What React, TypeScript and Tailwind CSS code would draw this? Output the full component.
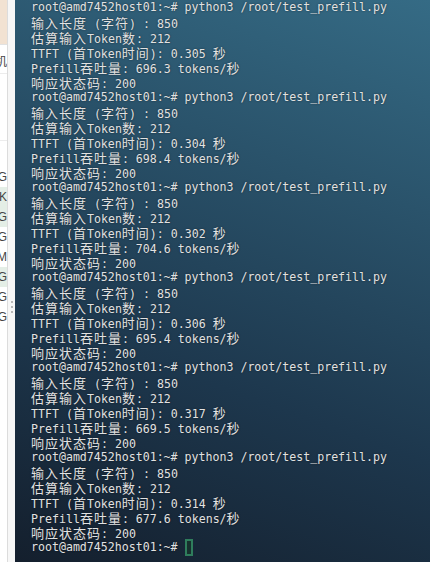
import React from "react";

const prompt = "root@amd7452host01:~# ";

const runs = [
  { ttft: "0.305", tps: "696.3" },
  { ttft: "0.304", tps: "698.4" },
  { ttft: "0.302", tps: "704.6" },
  { ttft: "0.306", tps: "695.4" },
  { ttft: "0.317", tps: "669.5" },
  { ttft: "0.314", tps: "677.6" },
];

const lines: string[] = [];
runs.forEach((r) => {
  lines.push(prompt + "python3 /root/test_prefill.py");
  lines.push("输入长度 (字符) : 850");
  lines.push("估算输入Token数: 212");
  lines.push("TTFT (首Token时间): " + r.ttft + " 秒");
  lines.push("Prefill吞吐量: " + r.tps + " tokens/秒");
  lines.push("响应状态码: 200");
});

// CJK glyphs take two terminal cells, so give them a 14px advance
function TermLine({ text }: { text: string }) {
  const parts = text.split(/([\u3000-\u9fff\uff00-\uffef]+)/);
  return (
    <div className="h-[15px] whitespace-pre">
      {parts.map((p, i) =>
        i % 2 === 1 ? (
          <span key={i} className="font-['Noto_Sans_CJK_SC',sans-serif] text-[13px] tracking-[1px]">
            {p}
          </span>
        ) : (
          <span key={i}>{p}</span>
        )
      )}
    </div>
  );
}

const sideLetters = [
  { t: "G", hl: false },
  { t: "K", hl: true },
  { t: "G", hl: true },
  { t: "G", hl: false },
  { t: "M", hl: false },
  { t: "G", hl: true },
  { t: "G", hl: false },
  { t: "G", hl: false },
];

export default function App() {
  return (
    <div className="flex h-[562px] w-[430px] overflow-hidden bg-white">
      <div className="flex w-[7px] flex-col overflow-hidden font-['Liberation_Sans',sans-serif] text-[12px] text-[#444]">
        <div className="h-[44px] bg-[#f2e2d2]"></div>
        <div className="h-[1px] bg-[#e2e2e2]"></div>
        <div className="mt-[8px] flex h-[16px] justify-end leading-[16px] font-['Noto_Sans_CJK_SC',sans-serif]">机</div>
        <div className="mt-[4px] h-[1px] bg-[#ececec]"></div>
        <div className="mt-[66px] h-[1px] bg-[#ececec]"></div>
        <div className="mt-[26px] flex flex-col">
          {sideLetters.map((l, i) => (
            <div
              key={i}
              className={
                "flex h-[20px] items-center justify-end leading-[20px] " +
                (l.hl ? "bg-[#e4eee6]" : "")
              }
            >
              {l.t}
            </div>
          ))}
        </div>
      </div>
      <div className="w-[1px] bg-[#dcdcdc]"></div>
      <div className="flex w-[7px] flex-col items-center bg-[#f7f7f7] pt-[301px]">
        <div className="flex flex-col gap-[3px]">
          <div className="h-[2px] w-[2px] bg-[#b8b8b8]"></div>
          <div className="h-[2px] w-[2px] bg-[#b8b8b8]"></div>
          <div className="h-[2px] w-[2px] bg-[#b8b8b8]"></div>
        </div>
      </div>
      <div className="flex-1 bg-[linear-gradient(200deg,#356b85_0%,#2a536b_30%,#1d374d_65%,#141f2d_100%)] pl-[16px] pt-0 font-['DejaVu_Sans_Mono','Noto_Sans_CJK_SC',monospace] text-[11.6px] leading-[15px] text-[#e2e2e2] [text-shadow:0_0_2px_rgba(0,0,0,0.55)]">
        {lines.map((l, i) => (
          <TermLine key={i} text={l} />
        ))}
        <div className="flex h-[15px] items-center whitespace-pre">
          <span>{prompt}</span>
          <span className="h-[17px] w-[8px] border-2 border-[#2f7d5c] bg-[#17302e]"></span>
        </div>
      </div>
    </div>
  );
}
